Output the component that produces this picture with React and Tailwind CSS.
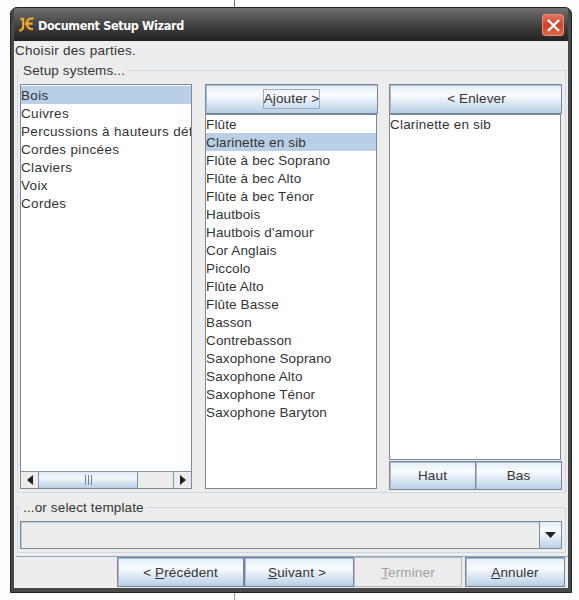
import React, { useState } from 'react';
import clsx from 'clsx';

const FAMILIES = [
  'Bois',
  'Cuivres',
  'Percussions à hauteurs définies',
  'Cordes pincées',
  'Claviers',
  'Voix',
  'Cordes',
];

const INSTRUMENTS = [
  'Flûte',
  'Clarinette en sib',
  'Flûte à bec Soprano',
  'Flûte à bec Alto',
  'Flûte à bec Ténor',
  'Hautbois',
  "Hautbois d'amour",
  'Cor Anglais',
  'Piccolo',
  'Flûte Alto',
  'Flûte Basse',
  'Basson',
  'Contrebasson',
  'Saxophone Soprano',
  'Saxophone Alto',
  'Saxophone Ténor',
  'Saxophone Baryton',
];

const Button = ({ className, disabled, focused, children }) => (
  <button
    disabled={disabled}
    className={clsx(
      'flex items-center justify-center border whitespace-nowrap',
      disabled
        ? 'border-[#b4bcc4] bg-[#ececec] text-[#a0a0a0]'
        : 'border-[#75869a] bg-linear-to-b from-[#e3edf6] via-[#fafcfe] via-35% to-[#b9cfe6] shadow-[inset_1px_1px_0_#aabdd2]',
      className
    )}
  >
    <span className={clsx(focused && '-mt-px border border-[#9aabc2] leading-[18px]')}>{children}</span>
  </button>
);

const List = ({ items, selected, onSelect, className }) => (
  <ul className={clsx('overflow-hidden', className)}>
    {items.map((item) => (
      <li
        key={item}
        onClick={() => onSelect && onSelect(item)}
        className={clsx(
          'h-[18px] leading-[19px] whitespace-nowrap',
          item === selected && 'bg-[#b8cfe5]'
        )}
      >
        {item}
      </li>
    ))}
  </ul>
);

const Group = ({ title, className, children }) => (
  <section className={clsx('relative border border-[#ccd8e4]', className)}>
    <h2 className="absolute -top-2.5 left-[3px] bg-[#ededed] px-0.5 leading-[19px]">{title}</h2>
    {children}
  </section>
);

const TitleBar = () => (
  <header className="flex h-[33px] items-center bg-linear-to-b from-[#707070] via-[#404040] via-55% to-[#222] pr-1 pl-1">
    <svg width="17" height="17" viewBox="0 0 17 17" fill="none" stroke="#f5a72c" strokeWidth="2.3">
      <path d="M2.4 3h2.8v7.4c0 2.4-1.4 3.8-4 4.2" />
      <path d="M15.6 2.4L13 2.6C10.200 2.900 9 4.400 9 7.500s1.300 5 4 5.400l2 .2M7 7.600h7.600" />
    </svg>
    <h1 className="mt-[3px] ml-[3px] font-['DejaVu_Sans_Condensed','DejaVu_Sans',sans-serif] text-[12.5px] font-bold tracking-[-0.36px] text-white">
      Document Setup Wizard
    </h1>
    <button className="mt-px ml-auto flex size-[22px] items-center justify-center rounded-[3px] border border-[#ee8d78] bg-linear-to-b from-[#df7562] via-[#cf4026] to-[#df6547]">
      <svg width="15" height="15" viewBox="0 0 15 15" stroke="#fff" strokeWidth="2.4">
        <path d="M2 2l11 11M13 2L2 13" />
      </svg>
    </button>
  </header>
);

const ScrollBar = () => (
  <div className="flex h-[17px] border-t border-[#8995a2] bg-[#ececec]">
    <div className="flex w-[17px] items-center justify-center">
      <svg width="6" height="10" viewBox="0 0 6 10" fill="#222">
        <path d="M6 0v10L0 5z" />
      </svg>
    </div>
    <div className="flex w-[100px] items-center justify-center gap-0.5 border-x border-[#7b93b2] bg-linear-to-b from-[#dce8f3] via-[#f5f9fd] via-35% to-[#b9cfe6]">
      <i className="h-2.5 w-px bg-[#6382a5]" />
      <i className="h-2.5 w-px bg-[#6382a5]" />
      <i className="h-2.5 w-px bg-[#6382a5]" />
    </div>
    <div className="ml-auto flex w-[18px] items-center justify-center border-l border-[#8995a2]">
      <svg width="6" height="10" viewBox="0 0 6 10" fill="#222">
        <path d="M0 0v10l6-5z" />
      </svg>
    </div>
  </div>
);

export default function App() {
  const [family, setFamily] = useState('Bois');
  const [instrument, setInstrument] = useState('Clarinette en sib');

  return (
    <div className="flex h-[600px] w-[579px] flex-col bg-[#fdfdfd] pl-2.5 font-['Liberation_Sans',Arial,sans-serif] text-[13.5px] tracking-[0.14px] text-[#333]">
      <div className="ml-[224px] h-[7px] w-px bg-[#70707c]" />
      <main className="flex h-[586px] w-[562px] flex-col overflow-hidden rounded-t-[7px] border border-[#222] bg-[#484848] px-[3px] pb-1">
        <TitleBar />
        <div className="flex grow flex-col bg-[#ededed]">
          <p className="pl-px leading-[19px] tracking-[0.28px]">Choisir des parties.</p>

          <Group title="Setup systems..." className="mt-2.5 ml-[3px] flex h-[423px] w-[549px] pt-[13px] pl-0.5">
            <div className="mr-[13px] flex h-[405px] w-[172px] flex-col border border-[#7a8a99]">
              <List
                items={FAMILIES}
                selected={family}
                onSelect={setFamily}
                className="grow bg-white pt-px tracking-[0.32px]"
              />
              <ScrollBar />
            </div>

            <div className="mr-[11px] flex h-[405px] w-[173px] flex-col">
              <Button className="h-[30px]" focused>Ajouter &gt;</Button>
              <List
                items={INSTRUMENTS}
                selected={instrument}
                onSelect={setInstrument}
                className="mr-px grow border border-[#7a8a99] bg-white"
              />
            </div>

            <div className="flex h-[406px] w-[173px] flex-col">
              <Button className="h-[30px] pl-0.5">&lt; Enlever</Button>
              <List
                items={['Clarinette en sib']}
                className="mr-px mb-px grow border border-[#7a8a99] bg-white tracking-[0.2px]"
              />
              <div className="flex h-[29px]">
                <Button className="w-[87px] pt-0.5">Haut</Button>
                <Button className="-ml-px w-[87px] pt-0.5">Bas</Button>
              </div>
            </div>
          </Group>

          <Group title="...or select template" className="mt-3.5 ml-[3px] h-[46px] w-[549px] pt-[13px] pl-0.5">
            <div className="flex h-7 w-[542px] border border-[#7a8a99] shadow-[inset_1px_1px_0_#b8cfe5]">
              <div className="ml-auto flex w-[22px] items-center justify-center border-l border-[#7a8a99] bg-linear-to-b from-[#e3edf6] via-[#fafcfe] via-35% to-[#b9cfe6]">
                <svg width="11" height="6" viewBox="0 0 11 6" fill="#222">
                  <path d="M0 0h11L5.5 6z" />
                </svg>
              </div>
            </div>
          </Group>

          <footer className="mt-[3px] ml-0.5 flex h-[31px] border-t border-[#8fa6c0] pl-[101px]">
            <Button className="w-[127px] pt-0.5"><span>&lt; <u>P</u>récédent</span></Button>
            <Button className="w-[110px] pt-0.5 pr-1"><span><u>S</u>uivant &gt;</span></Button>
            <Button className="w-[108px] pt-0.5" disabled><span><u>T</u>erminer</span></Button>
            <Button className="ml-[3px] w-[100px] pt-0.5"><span><u>A</u>nnuler</span></Button>
          </footer>
        </div>
      </main>
      <div className="ml-[224px] h-[7px] w-px bg-[#9999a8]" />
    </div>
  );
}
